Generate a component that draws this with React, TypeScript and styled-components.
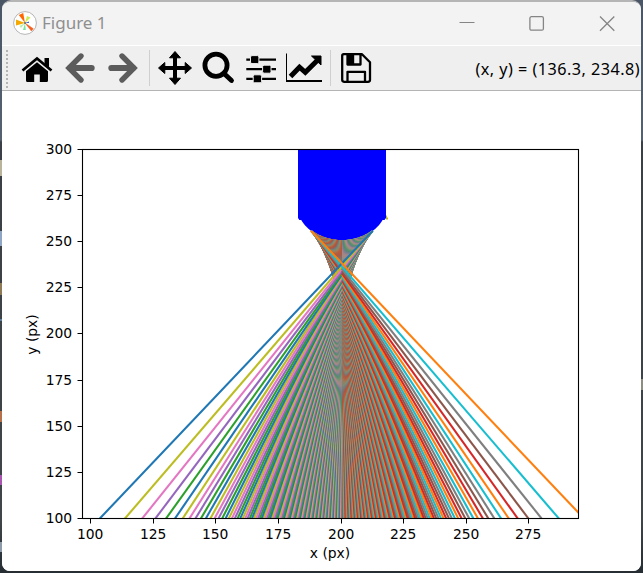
import React from "react";
import styled, { createGlobalStyle } from "styled-components";

const GlobalStyle = createGlobalStyle`
  html, body { margin: 0; padding: 0; }
  body { overflow: hidden; }
`;

const Desktop = styled.div`
  box-sizing: border-box;
  width: 643px;
  height: 573px;
  padding: 0 2px 2px 2px;
  background:
    linear-gradient(#b9b39b, #b9b39b) 0 160px / 2px 16px no-repeat,
    linear-gradient(#8fa6c4, #8fa6c4) 0 231px / 2px 15px no-repeat,
    linear-gradient(#8f7a58, #8f7a58) 0 283px / 2px 12px no-repeat,
    linear-gradient(#5f7f9f, #5f7f9f) 0 319px / 2px 2px no-repeat,
    linear-gradient(#b5714a, #b5714a) 0 411px / 2px 11px no-repeat,
    linear-gradient(#a856b0, #a856b0) 0 475px / 2px 10px no-repeat,
    linear-gradient(#8d9ba8, #8d9ba8) 0 542px / 2px 10px no-repeat,
    linear-gradient(#8d8d84, #8d8d84) 641px 379px / 2px 11px no-repeat,
    linear-gradient(#4a5565 0, #566170 140px, #3a4045 142px, #3f4549 520px, #262d33 573px);
`;

const Window = styled.main`
  box-sizing: border-box;
  display: flex;
  flex-direction: column;
  width: 639px;
  height: 571px;
  border-top: 2px solid #b5b5b5;
  border-radius: 9px 9px 8px 8px;
  overflow: hidden;
  background: #fff;
`;

const TitleBar = styled.header`
  display: flex;
  align-items: center;
  flex: 0 0 43px;
  background: #f3f3f3;
  border-bottom: 1px solid #fff;
`;

const AppIcon = styled.svg`
  width: 24px;
  height: 24px;
  margin: -2px 0 0 11px;
`;

const Title = styled.h1`
  flex: 1;
  margin: -2px 0 0 5px;
  font: 400 17px/24px "Noto Sans", "Open Sans", sans-serif;
  color: #8f8f8f;
`;

const WindowButton = styled.button`
  display: flex;
  align-items: center;
  justify-content: center;
  width: 70px;
  height: 43px;
  padding: 0;
  border: 0;
  background: none;
  &:last-child { width: 69px; }
`;

const Toolbar = styled.nav`
  display: flex;
  align-items: center;
  box-sizing: border-box;
  flex: 0 0 45px;
  background: #efefef;
  border-bottom: 1px solid #b4b4b4;
`;

const Grip = styled.div`
  width: 2px;
  height: 38px;
  margin: 1px 7px 0 4px;
  background: repeating-linear-gradient(#b4b4b4 0 2px, #efefef 2px 4px);
`;

const Tool = styled.button`
  display: flex;
  align-items: center;
  justify-content: center;
  width: 43px;
  height: 40px;
  padding: 0;
  border: 0;
  background: none;
`;

const Separator = styled.div`
  width: 1px;
  height: 36px;
  margin: 0 3px 0 5px;
  background: #cfcfcf;
`;

const Coordinates = styled.output`
  margin: 2px 0 0 auto;
  padding-right: 1px;
  font: 400 16.2px/24px "Noto Sans", "Open Sans", sans-serif;
  letter-spacing: 0.47px;
  color: #000;
  white-space: nowrap;
`;

const Figure = styled.svg`
  display: block;
  width: 639px;
  height: 480px;
  flex: none;
  background: #fff;
`;

const Label = styled.text`
  font: 13.89px "DejaVu Sans", sans-serif;
  fill: #000;
`;

const CYCLE = ["#1f77b4", "#ff7f0e", "#2ca02c", "#d62728", "#9467bd", "#8c564b", "#e377c2", "#7f7f7f", "#bcbd22", "#17becf"];

const X_SCALE = 2.504;
const Y_SCALE = 1.8445;
const CENTER = 341.9;
const RADIUS = 17.5;
const INDEX = 1.392;
const TIP = 250.9;
const RAYS_PER_SIDE = 120;
const EDGE = 12.38;
const toY = (v: number) => 518.5 - (v - 100) * Y_SCALE;
const surface = (h: number) => TIP + RADIUS - Math.sqrt(RADIUS * RADIUS - h * h);

// Distance of a ray from the axis; the spacing widens slightly toward the rim.
const rayHeight = (k: number) => {
  const j = RAYS_PER_SIDE - k;
  return EDGE - 0.1009 * j - 0.27 * (1 - Math.exp(-j / 6));
};

const rays = Array.from({ length: (RAYS_PER_SIDE + 1) * 2 }, (_, i) => {
  const side = i % 2 === 0 ? 1 : -1;
  const h = rayHeight(Math.floor(i / 2));
  const y = surface(h);
  const bend = Math.asin((INDEX * h) / RADIUS) - Math.asin(h / RADIUS);
  const end = h - Math.tan(bend) * (y - 80);
  return {
    color: CYCLE[i % 10],
    d: `M${CENTER + side * h * X_SCALE} ${toY(y)}L${CENTER + side * end * X_SCALE} ${toY(80)}`,
  };
});

const lens = (() => {
  const points: string[] = ["298 218"];
  for (let h = -17; h <= 17; h += 0.25) {
    points.push(`${CENTER + h * X_SCALE} ${Math.max(toY(surface(h)), 220)}`);
  }
  return `M298 149L${points.join("L")}L386 218V149Z`;
})();

const X_TICKS = [90.5, 153.5, 215.5, 278.5, 341.5, 403.5, 466.5, 528.5];
const Y_TICKS = [518.5, 472.5, 426.5, 380.5, 333.5, 287.5, 241.5, 195.5, 149.5];

const Plot = () => (
  <Figure viewBox="2 91 639 480">
    <clipPath id="axes"><rect x="82.5" y="149.5" width="496" height="369" /></clipPath>
    <g clipPath="url(#axes)">
      <path d={lens} fill="#00f" />
      <path d="M386 215.5h1v2h1v2h-2z" fill="#bcbd22" />
      {rays.map((r, i) => <path key={i} d={r.d} stroke={r.color} strokeWidth="2.08" fill="none" />)}
    </g>
    <rect x="82.5" y="149.5" width="496" height="369" fill="none" stroke="#000" strokeWidth="1.1" />
    {X_TICKS.map((x, i) => (
      <g key={x}>
        <path d={`M${x} 518.5v5`} stroke="#000" />
        <Label x={x - 0.3} y="539" textAnchor="middle">{100 + i * 25}</Label>
      </g>
    ))}
    {Y_TICKS.map((y, i) => (
      <g key={y}>
        <path d={`M77.5 ${y}h5`} stroke="#000" />
        <Label x="72.2" y={y + 4.5} textAnchor="end">{100 + i * 25}</Label>
      </g>
    ))}
    <Label x="330" y="558" textAnchor="middle">x (px)</Label>
    <Label transform="translate(36.5 334.5) rotate(-90)" textAnchor="middle">y (px)</Label>
  </Figure>
);

const Glyph = ({ children }: { children: React.ReactNode }) => (
  <svg width="40" height="40" viewBox="0 0 40 40">{children}</svg>
);

const HomeIcon = () => (
  <Glyph>
    <path d="M5.5 22.5L20 10.5L34.5 22.5" fill="none" stroke="#000" strokeWidth="2.7" />
    <path d="M27.5 10h4.5v9.5l-4.5-3.8zM20 14.2L31 23.3V32.5Q31 34 29.5 34H22.8V26.5H17.2V34H10.5Q9 34 9 32.5V23.3z" />
  </Glyph>
);

const BackIcon = ({ flip = false }: { flip?: boolean }) => (
  <Glyph>
    <g transform={flip ? "translate(40 0) scale(-1 1)" : undefined} fill="none" stroke="#5c5c5c">
      <path d="M21 8L9 20L21 32" strokeWidth="5.4" strokeLinecap="round" strokeLinejoin="miter" />
      <path d="M10 20H31.6" strokeWidth="6.2" strokeLinecap="round" />
    </g>
  </Glyph>
);

const PanIcon = () => (
  <Glyph>
    <path d="M20 8V32M8 20H32" stroke="#000" strokeWidth="4" />
    <path d="M20 3.5L25.5 9.8H14.5zM20 36.5L25.5 30.2H14.5zM3.5 20L9.8 14.5V25.5zM36.5 20L30.2 14.5V25.5z" stroke="#000" strokeLinejoin="round" />
  </Glyph>
);

const ZoomIcon = () => (
  <Glyph>
    <circle cx="18" cy="17.2" r="11.1" fill="none" stroke="#000" strokeWidth="4.8" />
    <path d="M26 25.5L33.5 32.5" stroke="#000" strokeWidth="4.8" strokeLinecap="round" />
  </Glyph>
);

const SlidersIcon = () => (
  <Glyph>
    <path d="M5.3 11.6H35M5.3 21.2H35M5.3 30.8H35" stroke="#000" strokeWidth="2.2" />
    <g fill="#000" stroke="#efefef" strokeWidth="1">
      <rect x="9.5" y="7.6" width="8.4" height="8" rx="1.5" />
      <rect x="21.6" y="17.2" width="8.4" height="8" rx="1.5" />
      <rect x="12.2" y="26.8" width="8.4" height="8" rx="1.5" />
    </g>
  </Glyph>
);

const ChartIcon = () => (
  <Glyph>
    <path d="M2.5 5.5V33.2H38" fill="none" stroke="#000" />
    <path d="M2 33H38" stroke="#000" strokeWidth="2" />
    <path d="M6.5 28.5L15.5 19.2L21.3 24.3L33 12.7" fill="none" stroke="#000" strokeWidth="5" />
    <path d="M27.5 8H37V17z" stroke="#000" strokeLinejoin="round" />
  </Glyph>
);

const SaveIcon = () => (
  <Glyph>
    <path d="M7.5 6.2H26L34 14.2V31.8Q34 33.8 32 33.8H8.5Q6.2 33.8 6.2 31.8V7.8Q6.2 6.2 7.8 6.2zM11.5 6.2V16.5H24.5V6.2M11.5 33.8V23.8H29V33.8" fill="none" stroke="#000" strokeWidth="2.3" strokeLinejoin="round" />
    <path d="M12 7H18.2V16H12z" />
  </Glyph>
);

export default function App() {
  return (
    <>
      <GlobalStyle />
      <Desktop>
        <Window>
          <TitleBar>
            <AppIcon viewBox="0 0 24 24">
              <circle cx="12" cy="12" r="11.4" fill="#fff" stroke="#a5a5a5" strokeWidth="0.8" />
              <path d="M12 12L5.8 4L10.2 2z" fill="#ff6700" />
              <path d="M12 12L3 8.5V14.5z" fill="#f5a900" />
              <path d="M12 12L14 5L17.5 6.5z" fill="#c8ef50" />
              <path d="M12 12L20.4 17.8L18.4 20z" fill="#f36020" stroke="#f36020" strokeWidth="0.5" />
              <path d="M12 12L12.8 19H10z" fill="#78e8a0" />
              <path d="M12 12L6.5 15L8 17z" fill="#b7efb0" />
              <path d="M12 12L16 10.6V12z" fill="#4169cf" />
              <circle cx="12" cy="12" r="1" fill="#666" />
            </AppIcon>
            <Title>Figure 1</Title>
            <WindowButton aria-label="Minimize">
              <svg width="16" height="16"><path d="M0.5 6.5H15.5" stroke="#858585" strokeWidth="1" /></svg>
            </WindowButton>
            <WindowButton aria-label="Maximize">
              <svg width="16" height="16"><rect x="0.9" y="0.7" width="13.5" height="13.5" rx="1.5" fill="none" stroke="#858585" strokeWidth="1.3" /></svg>
            </WindowButton>
            <WindowButton aria-label="Close">
              <svg width="16" height="16"><path d="M1 0.5L15.3 14.8M15.3 0.5L1 14.8" stroke="#858585" strokeWidth="1.3" /></svg>
            </WindowButton>
          </TitleBar>
          <Toolbar>
            <Grip />
            <Tool aria-label="Home"><HomeIcon /></Tool>
            <Tool aria-label="Back"><BackIcon /></Tool>
            <Tool aria-label="Forward"><BackIcon flip /></Tool>
            <Separator />
            <Tool aria-label="Pan"><PanIcon /></Tool>
            <Tool aria-label="Zoom"><ZoomIcon /></Tool>
            <Tool aria-label="Subplots"><SlidersIcon /></Tool>
            <Tool aria-label="Customize"><ChartIcon /></Tool>
            <Separator />
            <Tool aria-label="Save"><SaveIcon /></Tool>
            <Coordinates>(x, y) = (136.3, 234.8)</Coordinates>
          </Toolbar>
          <Plot />
        </Window>
      </Desktop>
    </>
  );
}
